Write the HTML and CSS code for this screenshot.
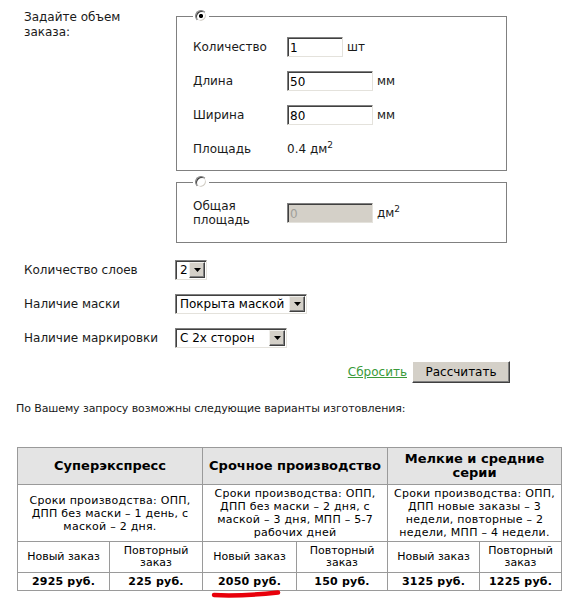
FILE: index.html
```html
<!DOCTYPE html>
<html lang="ru">
<head>
<meta charset="utf-8">
<title>Расчет стоимости</title>
<link rel="stylesheet" href="styles.css">
</head>
<body>
<div class="page">
  <div class="form">
    <div class="order">
      <div class="order-label">Задайте объем<br>заказа:</div>
      <div class="order-sets">
        <fieldset class="set set-dims">
          <legend class="set-legend"><span class="radio radio-checked"></span></legend>
          <div class="set-grid">
            <div class="f-label">Количество</div>
            <div class="f-value"><input class="text-input w-short" type="text" value="1"><span class="unit">шт</span></div>
            <div class="f-label">Длина</div>
            <div class="f-value"><input class="text-input w-long" type="text" value="50"><span class="unit">мм</span></div>
            <div class="f-label">Ширина</div>
            <div class="f-value"><input class="text-input w-long" type="text" value="80"><span class="unit">мм</span></div>
            <div class="f-label">Площадь</div>
            <div class="f-value"><span class="area-val">0.4 дм<sup class="sq">2</sup></span></div>
          </div>
        </fieldset>
        <fieldset class="set set-area">
          <legend class="set-legend"><span class="radio"></span></legend>
          <div class="set-grid">
            <div class="f-label f-label-2">Общая<br>площадь</div>
            <div class="f-value"><input class="text-input w-long is-disabled" type="text" value="0" disabled><span class="unit">дм<sup class="sq">2</sup></span></div>
          </div>
        </fieldset>
      </div>
    </div>

    <div class="options">
      <div class="opt-row">
        <div class="opt-label">Количество слоев</div>
        <div class="select sel-layers"><span class="select-text">2</span><span class="select-arrow"><svg width="7" height="4" viewBox="0 0 7 4"><path d="M0 0H7L3.5 4Z" fill="#000"/></svg></span></div>
      </div>
      <div class="opt-row">
        <div class="opt-label">Наличие маски</div>
        <div class="select sel-mask"><span class="select-text">Покрыта маской</span><span class="select-arrow"><svg width="7" height="4" viewBox="0 0 7 4"><path d="M0 0H7L3.5 4Z" fill="#000"/></svg></span></div>
      </div>
      <div class="opt-row">
        <div class="opt-label">Наличие маркировки</div>
        <div class="select sel-mark"><span class="select-text">С 2х сторон</span><span class="select-arrow"><svg width="7" height="4" viewBox="0 0 7 4"><path d="M0 0H7L3.5 4Z" fill="#000"/></svg></span></div>
      </div>
    </div>

    <div class="actions">
      <a class="reset-link" href="#">Сбросить</a>
      <button class="calc-btn" type="button">Рассчитать</button>
    </div>
  </div>

  <div class="results">
    <p class="results-intro">По Вашему запросу возможны следующие варианты изготовления:</p>
    <table class="variants">
      <colgroup>
        <col class="c1"><col class="c2"><col class="c3"><col class="c4"><col class="c5"><col class="c6">
      </colgroup>
      <tr class="row-head">
        <th colspan="2">Суперэкспресс</th>
        <th colspan="2">Срочное производство</th>
        <th colspan="2">Мелкие и средние<br>серии</th>
      </tr>
      <tr class="row-desc">
        <td colspan="2">Сроки производства: ОПП,<br>ДПП без маски – 1 день, с<br>маской – 2 дня.</td>
        <td colspan="2">Сроки производства: ОПП,<br>ДПП без маски – 2 дня, с<br>маской – 3 дня, МПП – 5-7<br>рабочих дней</td>
        <td colspan="2">Сроки производства: ОПП,<br>ДПП новые заказы – 3<br>недели, повторные – 2<br>недели, МПП – 4 недели.</td>
      </tr>
      <tr class="row-sub">
        <td>Новый заказ</td>
        <td>Повторный<br>заказ</td>
        <td>Новый заказ</td>
        <td>Повторный<br>заказ</td>
        <td>Новый заказ</td>
        <td>Повторный<br>заказ</td>
      </tr>
      <tr class="row-price">
        <td>2925 руб.</td>
        <td>225 руб.</td>
        <td>2050 руб.</td>
        <td>150 руб.</td>
        <td>3125 руб.</td>
        <td>1225 руб.</td>
      </tr>
    </table>
  </div>

  <svg class="mark" width="74" height="12" viewBox="0 0 74 12"><path d="M4 8C22 9 44 8 68 5.5" fill="none" stroke="#e8000b" stroke-width="4.5" stroke-linecap="round"/></svg>
</div>
</body>
</html>
```

FILE: styles.css
```css
html, body {
  margin: 0;
  padding: 0;
  background: #fff;
}

body {
  font-family: "DejaVu Sans", Verdana, sans-serif;
  color: #1a1a1a;
}

.page {
  position: relative;
  width: 588px;
  height: 607px;
  overflow: hidden;
}

.form {
  padding: 10px 0 0 24px;
}

.order {
  display: grid;
  grid-template-columns: 152px 331px;
}

.order-label {
  font-size: 12px;
  line-height: 15px;
}

.set {
  margin: 0;
  min-width: 0;
  border: 1px solid #808080;
}

.set-dims {
  padding: 8px 0 4px 16px;
}

.set-area {
  margin-top: 5px;
  padding: 8px 0 12px 16px;
}

.set-legend {
  padding: 0 2px;
  margin: 0;
  line-height: 0;
}

.radio {
  display: block;
  width: 12px;
  height: 12px;
  box-sizing: border-box;
  border-radius: 50%;
  border: 1px solid;
  border-color: #808080 #fff #fff #808080;
  box-shadow: inset 1px 1px 0 #404040, inset -1px -1px 0 #d4d0c8;
  background: #fff;
}

.radio-checked {
  background: radial-gradient(circle at 50% 50%, #000 0, #000 1.8px, #fff 2.4px);
}

.set-grid {
  display: grid;
  grid-template-columns: 94px auto;
  grid-auto-rows: 34px;
  align-items: center;
  font-size: 12px;
}

.f-label-2 {
  line-height: 14px;
}

.f-value {
  display: flex;
  align-items: center;
  gap: 4px;
}

.sq {
  font-size: 9px;
  line-height: 0;
  vertical-align: 5px;
}

.text-input {
  box-sizing: border-box;
  height: 20px;
  margin: 0;
  padding: 1px 2px 0;
  font-family: "DejaVu Sans", Verdana, sans-serif;
  font-size: 12px;
  color: #000;
  background: #fff;
  border: 1px solid;
  border-color: #808080 #e4e2dc #e4e2dc #808080;
  box-shadow: inset 1px 1px 0 #404040;
  outline: none;
}

.w-short {
  width: 56px;
}

.w-long {
  width: 86px;
}

.is-disabled {
  background: #d4d0c8;
  color: #a09f9a;
}

.options {
  margin-top: 10px;
}

.opt-row {
  display: grid;
  grid-template-columns: 151px auto;
  height: 34px;
  align-items: center;
  font-size: 12px;
}

.select {
  display: flex;
  align-items: center;
  box-sizing: border-box;
  height: 20px;
  padding: 1px;
  background: #fff;
  border: 1px solid;
  border-color: #808080 #e4e2dc #e4e2dc #808080;
  box-shadow: inset 1px 1px 0 #404040;
  font-size: 12px;
  color: #000;
}

.sel-layers { width: 32px; }
.sel-mask { width: 132px; }
.sel-mark { width: 112px; }

.select-text {
  flex: 1;
  padding-left: 3px;
  white-space: nowrap;
  overflow: hidden;
}

.select-arrow {
  display: flex;
  align-items: center;
  justify-content: center;
  box-sizing: border-box;
  width: 16px;
  height: 16px;
  flex: none;
  background: #d4d0c8;
  border: 1px solid;
  border-color: #f0efec #404040 #404040 #f0efec;
  box-shadow: inset -1px -1px 0 #808080;
}

.actions {
  display: flex;
  justify-content: flex-end;
  align-items: center;
  gap: 5px;
  width: 486px;
  margin-top: 6px;
}

.reset-link {
  font-size: 12px;
  color: #3a9a3a;
  text-decoration: underline;
}

.calc-btn {
  box-sizing: border-box;
  width: 98px;
  height: 22px;
  margin: 0;
  padding: 0 6px;
  font-family: "DejaVu Sans", Verdana, sans-serif;
  font-size: 12px;
  color: #000;
  background: #d4d0c8;
  border: 1px solid;
  border-color: #fff #404040 #404040 #fff;
  box-shadow: inset -1px -1px 0 #808080;
}

.results {
  padding-left: 16px;
}

.results-intro {
  margin: 18px 0 0;
  font-size: 11px;
  line-height: 16px;
  letter-spacing: -0.1px;
}

.variants {
  margin: 30px 0 0 1px;
  width: 544px;
  table-layout: fixed;
  border-collapse: collapse;
  font-size: 11px;
  color: #000;
}

.c1 { width: 92px; }
.c2 { width: 93px; }
.c3 { width: 94px; }
.c4 { width: 91px; }
.c5 { width: 92px; }
.c6 { width: 82px; }

.variants th,
.variants td {
  border: 1px solid #9a9a9a;
  padding: 0 2px;
  text-align: center;
  vertical-align: middle;
}

.row-head th {
  height: 36px;
  background: #e4e4e4;
  font-size: 13px;
  line-height: 14px;
  font-weight: bold;
}

.row-desc td {
  height: 56px;
  line-height: 13px;
  letter-spacing: 0.25px;
}

.row-sub td {
  height: 30px;
  line-height: 12px;
}

.row-price td {
  height: 17px;
  line-height: 13px;
  font-weight: bold;
  letter-spacing: 0.2px;
}

.mark {
  position: absolute;
  left: 210px;
  top: 587px;
}
```
